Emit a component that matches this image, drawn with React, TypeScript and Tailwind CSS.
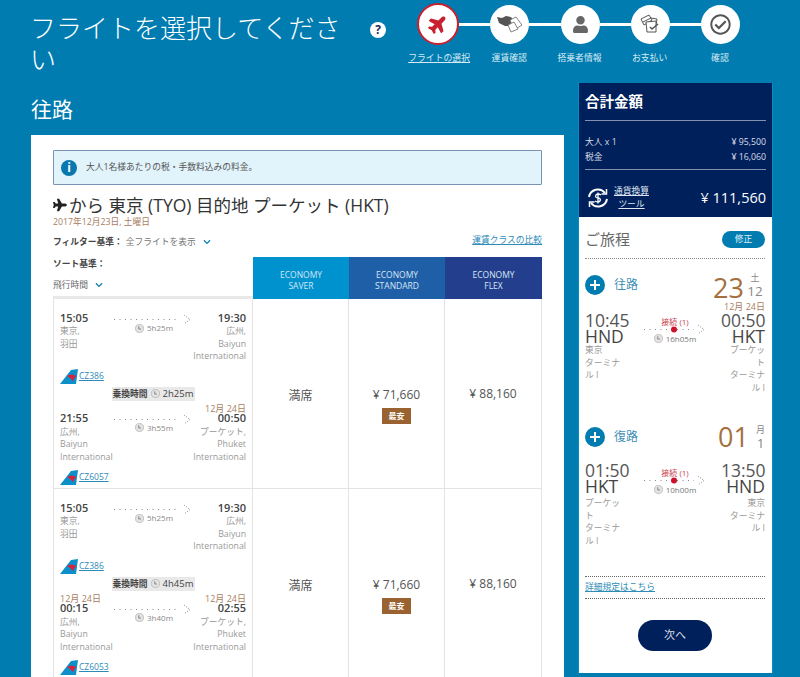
import React from "react";
import { FaPlane, FaUser, FaRegCheckCircle, FaChevronDown } from "react-icons/fa";

const Clock = () => (
  <svg width="9" height="9" viewBox="0 0 10 10" className="shrink-0">
    <circle cx="5" cy="5" r="4.5" fill="#e3e3e3" stroke="#aaa" strokeWidth="0.7" />
    <path d="M4.2 2.5V5.6H6.6" fill="none" stroke="#666" strokeWidth="0.8" />
  </svg>
);

const Tail = () => (
  <svg width="18" height="15" viewBox="0 0 18 15" className="shrink-0">
    <path d="M0 15 L11 1 L18 0 L16 15Z" fill="#0d8fc9" />
    <path d="M7 7 Q12 4 16 7 Q14 9 13 12 Q11 9 7 7Z" fill="#d8213a" />
  </svg>
);

const Chevron = () => <FaChevronDown className="text-[#0f7fb5]" size={8} />;

const DotsArrow = ({ w, red }: { w: number; red?: boolean }) => (
  <svg width={w} height="11" viewBox={`0 0 ${w} 11`} className="block">
    <line x1="0" y1="5.5" x2={w - 12} y2="5.5" stroke="#8a8a8a" strokeWidth="1" strokeDasharray="1 4.5" />
    {red && <circle cx={w / 2 - 1} cy="5.5" r="3" fill="#d0112b" />}
    <path d={`M${w - 8} 1 L${w - 2} 5.5 L${w - 8} 10`} fill="none" stroke="#8a8a8a" strokeWidth="1" strokeDasharray="1 1.5" />
  </svg>
);

type SegProps = {
  from: string; to: string; dur: string; flight: string;
  leftCity: string[]; rightCity: string[];
  leftDate?: string; rightDate?: string; dated?: boolean;
};

const Segment = ({ from, to, dur, flight, leftCity, rightCity, leftDate, rightDate, dated }: SegProps) => (
  <div>
    {dated && (
      <div className="flex justify-between h-[7px] text-[9px] leading-[9px] text-[#a9805f]">
        <span>{leftDate}</span>
        <span>{rightDate}</span>
      </div>
    )}
    <div className="flex justify-between">
      <div className="w-[52px] shrink-0">
        <div className="text-[11px] leading-[14px] font-semibold text-[#444]">{from}</div>
        <div className={`text-[8.75px] leading-[12.5px] text-[#999] whitespace-nowrap ${dated ? "mt-[1px]" : ""}`}>
          {leftCity.map((c) => <div key={c}>{c}</div>)}
        </div>
      </div>
      <div className="w-[78px] pt-[3px] shrink-0">
        <DotsArrow w={78} />
        <div className="-mt-[2px] flex items-center gap-[3px] pl-[21px] text-[8px] leading-[10px] text-[#888]">
          <Clock />{dur}
        </div>
      </div>
      <div className="w-[52px] shrink-0 text-right">
        <div className="text-[11px] leading-[14px] font-semibold text-[#444]">{to}</div>
        <div className={`text-[8.75px] leading-[12.5px] text-[#999] whitespace-nowrap flex flex-col items-end ${dated ? "mt-[1px]" : ""}`}>
          {rightCity.map((c) => <div key={c}>{c}</div>)}
        </div>
      </div>
    </div>
    <div className="flex items-center gap-[1px] h-[16px] mt-[6px]">
      <Tail />
      <a className="text-[8.5px] text-[#2d8bb8] underline">{flight}</a>
    </div>
  </div>
);

const Chip = ({ t }: { t: string }) => (
  <div className="flex justify-center h-[14px] mt-[2px]">
    <div className="w-[83px] justify-center flex items-center gap-[3px] bg-[#e9e9e9] text-[8.75px] leading-[14px] text-[#444] font-semibold whitespace-nowrap">
      乗換時間 <Clock /> <span className="font-normal text-[9.5px]">{t}</span>
    </div>
  </div>
);

const PriceRow = ({ seg1, seg2, chip }: { seg1: SegProps; seg2: SegProps; chip: string }) => (
  <div className="flex h-[190px] border-b border-[#e3e3e3]">
    <div className="w-[200px] border-x border-[#e3e3e3] px-[6px] pt-[12px] shrink-0">
      <Segment {...seg1} />
      <Chip t={chip} />
      <div className="mt-[3px]"><Segment {...seg2} dated /></div>
    </div>
    <div className="w-[96px] flex items-center justify-center border-r border-[#e3e3e3] pt-[5px] text-[12px] text-[#555]">満席</div>
    <div className="w-[96px] flex flex-col items-center justify-center border-r border-[#e3e3e3] pt-[24px]">
      <div className="text-[12px] leading-[16px] text-[#555]">¥ 71,660</div>
      <div className="mt-[5px] w-[29px] h-[16px] bg-[#9a6230] text-white text-[8px] leading-[16px] text-center font-semibold">最安</div>
    </div>
    <div className="w-[97px] flex items-start justify-center border-r border-[#e3e3e3] pt-[87px] text-[12px] leading-[16px] text-[#555]">¥ 88,160</div>
  </div>
);

const Circle = ({ children, big }: { children: React.ReactNode; big?: boolean }) => (
  <div className={`shrink-0 rounded-full bg-white flex items-center justify-center ${big ? "w-[42px] h-[42px] border-2 border-[#c8202f]" : "w-[39px] h-[39px]"}`}>
    {children}
  </div>
);

const Line = () => <div className="flex-1 h-[3px] bg-white" />;

const Steps = () => (
  <div className="w-[353px] shrink-0 ml-[16px] pt-[3px]">
    <div className="flex items-center pl-[15px] pr-[15px]">
      <Circle big><FaPlane size={20} className="text-[#c8202f] -rotate-45" /></Circle>
      <Line />
      <Circle>
        <svg width="26" height="20" viewBox="0 0 26 20">
          <path d="M0 3 L5 4 L9 2 L14 3 L16 6 L12 12 L8 12 L2 9Z" fill="#555" />
          <path d="M13 6 L19 3 L25 11 L17 16Z" fill="#fff" stroke="#666" strokeWidth="0.8" />
          <path d="M11 11 L17 8 L21 15 L14 18Z" fill="#fff" stroke="#666" strokeWidth="0.8" />
        </svg>
      </Circle>
      <Line />
      <Circle><FaUser size={17} className="text-[#666]" /></Circle>
      <Line />
      <Circle>
        <svg width="22" height="22" viewBox="0 0 22 22" fill="none" stroke="#555" strokeWidth="1">
          <path d="M2 6 L10 2 L13 7 L5 12Z" />
          <path d="M4 9 L12 5 L18 6 L17 12" />
          <path d="M7 9 L17 8 L17 19 L8 19Z" fill="#fff" />
          <path d="M11 14 L13 16 L19 11" strokeWidth="1.6" />
        </svg>
      </Circle>
      <Line />
      <Circle><FaRegCheckCircle size={21} className="text-[#555]" /></Circle>
    </div>
    <div className="grid grid-cols-5 pl-[2px] mt-[7px] text-[8.85px] leading-[13px] text-center text-[#d6eaf4] whitespace-nowrap">
      <span className="underline">フライトの選択</span>
      <span>運賃確認</span>
      <span>搭乗者情報</span>
      <span>お支払い</span>
      <span>確認</span>
    </div>
  </div>
);

const StopOut = ({ dur }: { dur: string }) => (
  <div className="w-[62px] shrink-0 flex flex-col items-center pt-[15px]">
    <div className="-mb-[2px] text-[8px] leading-[9px] text-[#c8414f]">接続 (1)</div>
    <DotsArrow w={62} red />
    <div className="-mt-[2px] flex items-center gap-[3px] text-[8px] leading-[11px] text-[#777]"><Clock />{dur}</div>
  </div>
);

const StopBack = ({ dur }: { dur: string }) => (
  <div className="w-[62px] shrink-0 flex flex-col items-center pt-[6px]">
    <div className="-mb-[2px] text-[8px] leading-[9px] text-[#c8414f]">接続 (1)</div>
    <DotsArrow w={62} red />
    <div className="-mt-[2px] flex items-center gap-[3px] text-[8px] leading-[11px] text-[#777]"><Clock />{dur}</div>
  </div>
);

const TimeBlock = ({ time, code, lines, right, date, back }: { time: string; code: string; lines: string[]; right?: boolean; date?: string; back?: boolean }) => (
  <div className={`w-[44px] shrink-0 ${right ? "text-right" : ""}`}>
    {date !== undefined && <div className="h-[10px] whitespace-nowrap text-[9px] leading-[10px] text-[#a9805f]">{date}</div>}
    <div className="text-[17.5px] leading-[16px] text-[#555] whitespace-nowrap">{time}</div>
    <div className="text-[17.5px] leading-[16px] text-[#444]">{code}</div>
    <div className={`text-[8.75px] leading-[12.6px] text-[#999] ${back ? "mt-[3px]" : ""}`}>
      {lines.map((l, i) => <div key={i}>{l}</div>)}
    </div>
  </div>
);

const Plus = () => (
  <div className="w-[20px] h-[20px] rounded-full bg-[#007cb0] flex items-center justify-center">
    <svg width="10" height="10" viewBox="0 0 10 10"><path d="M5 0V10M0 5H10" stroke="#fff" strokeWidth="2" /></svg>
  </div>
);

const CNY = "¥";

export default function App() {
  const f1: SegProps = { from: "15:05", to: "19:30", dur: "5h25m", flight: "CZ386", leftCity: ["東京,", "羽田"], rightCity: ["広州,", "Baiyun", "International"] };
  const r = ["プーケット,", "Phuket", "International"];
  const l = ["広州,", "Baiyun", "International"];
  return (
    <div
      className="w-[800px] h-[677px] overflow-hidden bg-[#007cb0] text-[#333]"
      style={{ fontFamily: '"Open Sans","Noto Sans CJK JP",sans-serif' }}
    >
      <div className="flex h-[83px]">
        <h1 className="ml-[30px] mt-[13px] w-[325px] text-[26px] leading-[31px] font-light text-white shrink-0">
          フライトを選択してください
        </h1>
        <div className="mt-[22px] ml-[15px] w-[16px] h-[16px] rounded-full bg-white flex items-center justify-center text-[12px] font-bold text-[#1c2f5c] shrink-0">?</div>
        <Steps />
      </div>
      <div className="flex items-start">
        <div className="ml-[31px] w-[533px] shrink-0">
          <div className="h-[52px] pt-[11px] text-[21px] leading-[30px] text-white">往路</div>
          <div className="bg-white h-[600px] px-[22px] pt-[15px]">
            <div className="h-[35px] border border-[#7a93b5] bg-[#e1f3fb] flex items-center pl-[7px] gap-[9px] rounded-[1px]">
              <div className="w-[16px] h-[16px] rounded-full bg-[#0a78b0] flex items-center justify-center text-white text-[12px] font-bold">i</div>
              <span className="text-[8.75px] text-[#555]">大人1名様あたりの税・手数料込みの料金。</span>
            </div>
            <div className="mt-[9px] flex items-center text-[17.5px] leading-[22px] text-[#333] whitespace-nowrap">
              <FaPlane size={14} className="text-[#222] mr-[2px]" />から 東京 (TYO) 目的地 プーケット (HKT)
            </div>
            <div className="mt-[1px] text-[8.75px] leading-[11px] text-[#a9805f]">2017年12月23日, 土曜日</div>
            <div className="mt-[5px] flex justify-between items-start text-[8.75px] leading-[14px]">
              <div className="flex items-center mt-[2px]">
                <span className="font-semibold text-[#444]">フィルター基準：</span>
                <span className="ml-[3px] text-[#777]">全フライトを表示</span>
                <span className="ml-[7px]"><Chevron /></span>
              </div>
              <a className="text-[#2d8bb8] underline">運賃クラスの比較</a>
            </div>
            <div className="flex h-[42px] mt-[8px]">
              <div className="w-[200px] shrink-0 border-b-[3px] border-[#e8e8e8] text-[8.75px]">
                <div className="font-semibold text-[#444] leading-[14px]">ソート基準：</div>
                <div className="flex items-center gap-[7px] mt-[7px] text-[#666] leading-[14px]">飛行時間 <Chevron /></div>
              </div>
              {[["SAVER", "w-[96px] bg-[#0092cf]"], ["STANDARD", "w-[96px] bg-[#1f5fa8]"], ["FLEX", "w-[97px] bg-[#243e8e]"]].map(([n, c]) => (
                <div key={n} className={`${c} flex flex-col items-center justify-center pt-[3px] text-[8.5px] leading-[11px] text-[#d5e6f2]`}>
                  <span>ECONOMY</span><span>{n}</span>
                </div>
              ))}
            </div>
            <PriceRow
              chip="2h25m"
              seg1={f1}
              seg2={{ from: "21:55", to: "00:50", dur: "3h55m", flight: "CZ6057", leftCity: l, rightCity: r, rightDate: "12月 24日" }}
            />
            <PriceRow
              chip="4h45m"
              seg1={f1}
              seg2={{ from: "00:15", to: "02:55", dur: "3h40m", flight: "CZ6053", leftCity: l, rightCity: r, leftDate: "12月 24日", rightDate: "12月 24日" }}
            />
          </div>
        </div>
        <aside className="ml-[14px] w-[195px] shrink-0 border-x border-[#0090c4]">
          <div className="bg-[#00205b] text-white px-[6px] h-[134px]">
            <div className="h-[38px] pt-[10px] text-[14.5px] leading-[18px] font-semibold border-b border-[#8391ad]">合計金額</div>
            <div className="pt-[14px] text-[8.75px] leading-[15px] text-[#d8dde8] border-b border-[#8391ad] h-[49px]">
              <div className="flex justify-between"><span>大人 x 1</span><span>{CNY} 95,500</span></div>
              <div className="flex justify-between"><span>税金</span><span>{CNY} 16,060</span></div>
            </div>
            <div className="flex items-center h-[47px] pt-[8px]">
              <svg width="22" height="22" viewBox="0 0 22 22" className="ml-[2px] shrink-0" fill="none" stroke="#fff" strokeWidth="2">
                <path d="M2 10 A9 9 0 0 1 18 6" />
                <path d="M20 12 A9 9 0 0 1 4 16" />
                <path d="M19.5 2 V7 H14.5 M2.5 20 V15 H7.5" strokeWidth="1.5" />
                <path d="M14 8 Q11 6 9 8 Q7.5 10.5 11 11 Q14.5 11.7 13 14 Q11 16 8 14 M11 5.5 V16.5" strokeWidth="1.3" />
              </svg>
              <div className="ml-[5px] text-[8.75px] leading-[13px] text-center underline text-[#dfe4ee]">通貨換算<br />ツール</div>
              <div className="ml-auto text-[14.5px] font-medium whitespace-nowrap">{CNY} 111,560</div>
            </div>
          </div>
          <div className="bg-white h-[456px] pl-[6px] pr-[7px]">
            <div className="flex items-center justify-between h-[42px] pt-[4px] border-b border-dotted border-[#888]">
              <span className="text-[15px] text-[#666]">ご旅程</span>
              <span className="w-[43px] h-[17px] rounded-full bg-[#007cb0] text-center text-[8.75px] leading-[17px] text-[#dff0f8]">修正</span>
            </div>
            <div className="h-[143px]">
              <div className="flex items-center h-[34px] mt-[9px]">
                <Plus />
                <span className="ml-[9px] text-[12px] text-[#3f8fb8]">往路</span>
                <span className="ml-auto pt-[5px] text-[27px] leading-[34px] text-[#a5703f]">23</span>
                <div className="ml-[1px] w-[20px] text-center text-[#888]">
                  <div className="text-[9px] leading-[12px]">土</div>
                  <div className="text-[13.5px] leading-[14px]">12</div>
                </div>
              </div>
              <div className="flex justify-between">
                <div className="pt-[10px]"><TimeBlock time="10:45" code="HND" lines={["東京", "ターミナ", "ル I"]} /></div>
                <StopOut dur="16h05m" />
                <TimeBlock right time="00:50" code="HKT" date="12月 24日" lines={["プーケッ", "ト", "ターミナ", "ル I"]} />
              </div>
            </div>
            <div className="h-[156px]">
              <div className="flex items-center h-[34px] mt-[9px]">
                <Plus />
                <span className="ml-[9px] text-[12px] text-[#3f8fb8]">復路</span>
                <span className="ml-auto text-[27px] leading-[34px] text-[#a5703f]">01</span>
                <div className="ml-[7px] text-center text-[#888]">
                  <div className="text-[9px] leading-[12px]">月</div>
                  <div className="text-[13.5px] leading-[14px]">1</div>
                </div>
              </div>
              <div className="flex justify-between mt-[8px]">
                <TimeBlock back time="01:50" code="HKT" lines={["プーケッ", "ト", "ターミナ", "ル I"]} />
                <StopBack dur="10h00m" />
                <TimeBlock back right time="13:50" code="HND" lines={["東京", "ターミナ", "ル I"]} />
              </div>
            </div>
            <div className="h-[23px] border-y border-dotted border-[#666] text-[8.75px] leading-[21px] text-[#2d8bb8] underline">詳細規定はこちら</div>
            <div className="flex justify-center mt-[21px]">
              <button className="w-[74px] h-[31px] rounded-full bg-[#00205b] text-[11px] text-[#d8dde8]">次へ</button>
            </div>
          </div>
        </aside>
      </div>
    </div>
  );
}
